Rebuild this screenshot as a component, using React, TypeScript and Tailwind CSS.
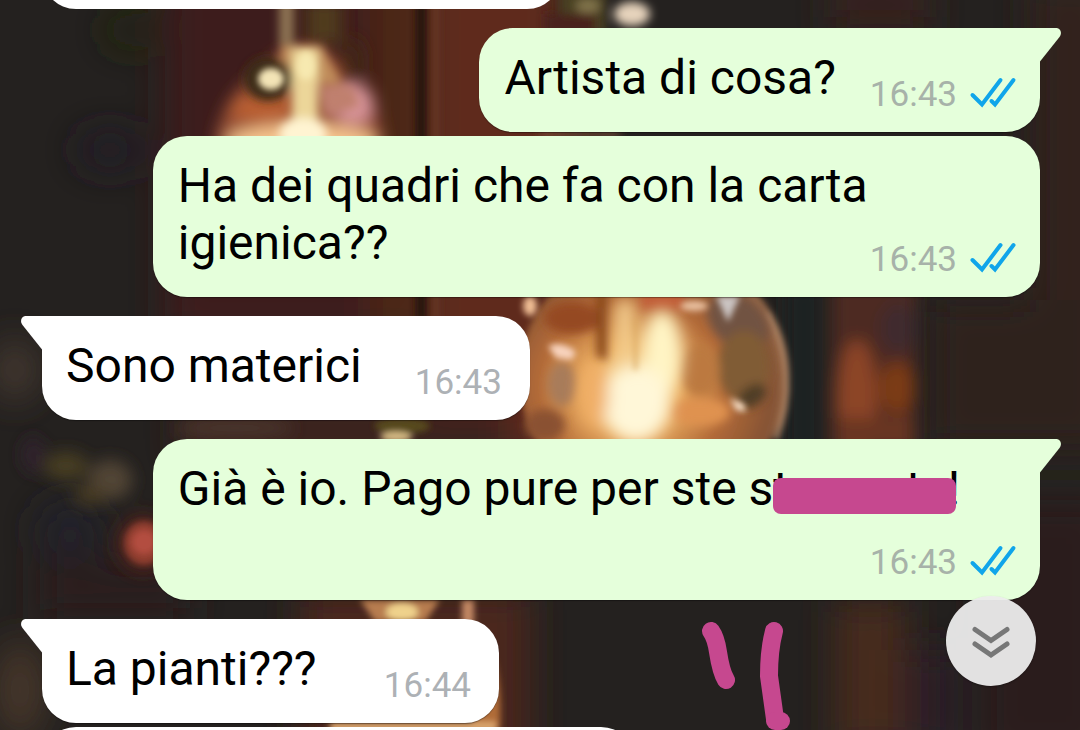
import type { ReactNode } from "react";

type Side = "in" | "out";

type BubbleProps = {
  side: Side;
  time: string;
  tail?: boolean;
  className?: string;
  children: ReactNode;
};

function Tail({ side }: { side: Side }) {
  return (
    <svg
      aria-hidden="true"
      viewBox="0 0 21 34"
      className={
        side === "out"
          ? "absolute top-0 left-full h-[34px] w-[21px] fill-[#e5ffdb]"
          : "absolute top-0 right-full h-[34px] w-[21px] -scale-x-100 fill-white"
      }
    >
      <path d="M-1 0H16C20.500 0 22.500 5 19.500 9L0 33.500H-1Z" />
    </svg>
  );
}

function ReadTicks() {
  return (
    <svg
      role="img"
      aria-label="Letto"
      viewBox="0 0 46 34"
      className="ml-3 h-[34px] w-[46px] overflow-visible fill-none stroke-[#10a5ea] stroke-4"
      strokeLinecap="round"
    >
      <path d="M3.500 17 13 26.500 31.500 2" />
      <path d="M22.500 23 26 26.500 44.500 2" />
    </svg>
  );
}

function Bubble({ side, time, tail = false, className = "", children }: BubbleProps) {
  const out = side === "out";
  const corner = tail ? (out ? "rounded-tr-none" : "rounded-tl-none") : "";

  return (
    <li
      className={`relative flow-root max-w-[88.900%] shrink-0 rounded-[34px] pt-[21px] pb-4 text-[48px] leading-[57px] text-black shadow-[0_1px_1px_rgba(0,0,0,0.35)] ${
        out ? "self-end bg-[#e5ffdb] px-[25px]" : "self-start bg-white px-6"
      } ${corner} ${className}`}
    >
      {tail && <Tail side={side} />}
      {children}
      <span
        className={`float-right mt-[25px] flex items-center text-[35px] leading-[42px] ${
          out ? "ml-[34px] text-[#a7b2a9]" : "ml-[53px] pr-1 text-[#adb1b5]"
        }`}
      >
        <time>{time}</time>
        {out && <ReadTicks />}
      </span>
    </li>
  );
}

// word crossed out with a marker, only the tall letters stick out
function Redacted() {
  return (
    <span className="relative inline-block whitespace-nowrap">
      t<span className="inline-block w-[117px]" />t
      <span className="inline-block w-[26px]" />!
      <span className="absolute top-[18px] right-1 left-0 h-9 rounded-lg bg-[#c6488f]" />
    </span>
  );
}

function Wallpaper() {
  return (
    <svg
      aria-hidden="true"
      viewBox="0 0 1080 730"
      preserveAspectRatio="xMidYMid slice"
      className="absolute inset-0 h-full w-full"
    >
      <defs>
        <filter id="b3" x="-50%" y="-50%" width="200%" height="200%">
          <feGaussianBlur stdDeviation="3" />
        </filter>
        <filter id="b5" x="-50%" y="-50%" width="200%" height="200%">
          <feGaussianBlur stdDeviation="5" />
        </filter>
        <filter id="b8" x="-50%" y="-50%" width="200%" height="200%">
          <feGaussianBlur stdDeviation="8" />
        </filter>
        <filter id="b18" x="-50%" y="-50%" width="200%" height="200%">
          <feGaussianBlur stdDeviation="18" />
        </filter>
        <radialGradient id="globe" cx="0.42" cy="0.55" r="0.58">
          <stop offset="0" stopColor="#fff0b8" />
          <stop offset="0.3" stopColor="#e9ab5f" />
          <stop offset="0.6" stopColor="#b26a38" />
          <stop offset="0.9" stopColor="#855334" />
          <stop offset="1" stopColor="#96694a" />
        </radialGradient>
      </defs>
      <rect width="1080" height="730" fill="#24211f" />

      <g filter="url(#b18)">
        <rect x="165" y="-40" width="240" height="380" fill="#3e1f1b" />
        <rect x="370" y="-40" width="50" height="380" fill="#4d2819" />
        <rect x="425" y="-40" width="140" height="500" fill="#5e2b1e" />
        <rect x="180" y="400" width="330" height="60" fill="#3e241d" />
        <rect x="300" y="590" width="230" height="180" fill="#4b281b" />
        <rect x="830" y="-20" width="100" height="50" fill="#39201b" />
        <rect x="1030" y="-20" width="80" height="320" fill="#33201d" />
        <rect x="930" y="300" width="180" height="150" fill="#2d201f" />
        <rect x="980" y="500" width="130" height="260" fill="#2c1f1e" />
        <rect x="835" y="600" width="70" height="150" fill="#462a1f" />
        <rect x="905" y="650" width="50" height="100" fill="#2c1e26" />
        <rect x="40" y="560" width="150" height="60" fill="#2b1e1f" />
        <ellipse cx="15" cy="370" rx="22" ry="30" fill="#473a30" />
        <ellipse cx="20" cy="690" rx="24" ry="50" fill="#48382a" />
        <ellipse cx="130" cy="30" rx="24" ry="18" fill="#23260f" />
        <ellipse cx="110" cy="150" rx="34" ry="20" fill="#201f26" />
        <ellipse cx="70" cy="530" rx="34" ry="30" fill="#20212a" />
      </g>

      <g filter="url(#b3)">
        <rect x="415" y="-10" width="12" height="330" fill="#2a130f" />
        <rect x="432" y="-10" width="8" height="330" fill="#643524" />
      </g>
      <g filter="url(#b8)">
        <rect x="785" y="285" width="38" height="170" fill="#1b2023" />
        <rect x="832" y="280" width="84" height="170" fill="#4d2922" />
        <ellipse cx="857" cy="400" rx="20" ry="60" fill="#8c4528" />
        <ellipse cx="897" cy="388" rx="18" ry="26" fill="#7b3a16" />
        <ellipse cx="898" cy="328" rx="18" ry="26" fill="#40292d" />
        <rect x="836" y="418" width="76" height="30" fill="#693523" />
      </g>

      {/* hanging bulb, top left */}
      <g filter="url(#b8)">
        <path d="M262 70 Q300 25 340 65 Q378 84 384 150 H214 Q220 95 262 70Z" fill="#965034" />
        <ellipse cx="262" cy="108" rx="32" ry="14" fill="#b95f31" />
        <ellipse cx="354" cy="104" rx="20" ry="20" fill="#d9949a" />
        <rect x="306" y="0" width="36" height="44" fill="#4f3b1a" />
        <ellipse cx="352" cy="62" rx="12" ry="24" fill="#432713" />
        <ellipse cx="302" cy="142" rx="76" ry="18" fill="#f6c48d" />
      </g>
      <g filter="url(#b5)">
        <rect x="279" y="-5" width="15" height="50" fill="#8d7352" />
        <path d="M280 46H322L342 84H284Z" fill="#c18e5c" />
        <ellipse cx="268" cy="79" rx="24" ry="22" fill="#3a2a18" />
        <rect x="292" y="48" width="26" height="90" fill="#ecd699" />
        <path d="M320 86H352L360 106 326 116Z" fill="#c0806e" />
        <ellipse cx="303" cy="134" rx="24" ry="16" fill="#fff4d2" />
      </g>
      <g filter="url(#b3)">
        <ellipse cx="271" cy="79" rx="13" ry="11" fill="#f3e4b6" />
        <ellipse cx="306" cy="66" rx="9" ry="14" fill="#f7e9b0" />
      </g>

      {/* cap of the centre bulb */}
      <g filter="url(#b5)">
        <rect x="560" y="-10" width="46" height="44" fill="#484124" />
        <rect x="545" y="14" width="50" height="20" fill="#4a201b" />
        <ellipse cx="588" cy="6" rx="12" ry="7" fill="#82744b" />
        <ellipse cx="632" cy="14" rx="18" ry="12" fill="#e6d3bc" />
        <rect x="540" y="131" width="80" height="6" fill="#82533a" />
      </g>

      {/* lit globe in the centre */}
      <g filter="url(#b3)">
        <ellipse cx="654" cy="376" rx="135" ry="128" fill="url(#globe)" />
        <path d="M768 312Q802 374 776 440" fill="none" stroke="#b98e6c" strokeWidth="4" />
      </g>
      <g filter="url(#b5)">
        <ellipse cx="738" cy="322" rx="34" ry="24" fill="#715343" transform="rotate(40 738 322)" />
        <ellipse cx="744" cy="366" rx="26" ry="36" fill="#805b35" />
        <ellipse cx="572" cy="318" rx="28" ry="16" fill="#954a22" />
        <rect x="596" y="290" width="12" height="70" fill="#8b491d" />
        <rect x="640" y="292" width="44" height="18" fill="#c05c35" />
        <ellipse cx="562" cy="384" rx="14" ry="22" fill="#a87b5a" />
        <ellipse cx="752" cy="396" rx="16" ry="10" fill="#4f3d26" transform="rotate(-35 752 396)" />
        <ellipse cx="700" cy="370" rx="20" ry="26" fill="#bc793f" />
        <ellipse cx="700" cy="412" rx="30" ry="14" fill="#df924f" />
        <ellipse cx="545" cy="425" rx="20" ry="16" fill="#8a5130" />
      </g>
      <g filter="url(#b8)">
        <rect x="616" y="300" width="18" height="90" fill="#f4cf90" />
        <ellipse cx="662" cy="354" rx="20" ry="44" fill="#fff4c4" />
        <ellipse cx="636" cy="404" rx="34" ry="38" fill="#fff7d8" />
        <ellipse cx="594" cy="394" rx="14" ry="34" fill="#f0ae66" />
      </g>
      <g filter="url(#b3)">
        <ellipse cx="530" cy="306" rx="7" ry="10" fill="#f0be94" />
        <path d="M548 346Q562 340 576 352L572 360 556 358Z" fill="#f8d3bd" />
        <ellipse cx="694" cy="306" rx="14" ry="5" fill="#eac1a0" />
        <path d="M716 296H740L728 322Z" fill="#cbc4c2" />
        <path d="M730 398 744 404 746 412 736 410Z" fill="#ffe6cc" />
        <rect x="634" y="318" width="3" height="52" fill="#d8a55c" />
      </g>

      {/* lower left lights */}
      <g filter="url(#b8)">
        <ellipse cx="66" cy="466" rx="22" ry="14" fill="#473e24" />
        <ellipse cx="110" cy="480" rx="22" ry="20" fill="#514435" />
        <ellipse cx="90" cy="495" rx="16" ry="10" fill="#463a20" />
        <ellipse cx="33" cy="455" rx="10" ry="18" fill="#30232f" />
        <ellipse cx="143" cy="543" rx="28" ry="30" fill="#47231a" />
        <ellipse cx="235" cy="428" rx="60" ry="8" fill="#4c372e" />
      </g>
      <g filter="url(#b3)">
        <ellipse cx="402" cy="426" rx="28" ry="8" fill="#57491f" />
        <ellipse cx="396" cy="437" rx="16" ry="5" fill="#d8bd86" />
        <ellipse cx="144" cy="543" rx="20" ry="22" fill="#8f3e2f" />
        <ellipse cx="144" cy="542" rx="12" ry="12" fill="#b34d40" />
        <path d="M360 600H440L425 622H375Z" fill="#b77d50" />
        <ellipse cx="402" cy="612" rx="16" ry="9" fill="#efd28c" />
        <rect x="462" y="600" width="12" height="24" fill="#c38863" />
        <path d="M486 640Q503 670 500 730H470Z" fill="#b06c37" />
        <rect x="330" y="722" width="166" height="10" fill="#dca770" />
      </g>
    </svg>
  );
}

function Scribbles() {
  return (
    <svg
      aria-hidden="true"
      viewBox="0 0 90 112"
      className="absolute right-[290px] bottom-0 h-28 w-[90px] fill-none stroke-[#c6488f]"
      strokeWidth="18"
      strokeLinecap="round"
      strokeLinejoin="round"
    >
      <path d="M11 13Q16 20 18 34Q21 54 26 62" />
      <path d="M74 13Q69 32 69 58L75 101" />
      <path d="M75 103H81" />
    </svg>
  );
}

export default function App() {
  return (
    <main className="relative h-screen overflow-hidden bg-[#24211f] font-[Roboto,sans-serif]">
      <Wallpaper />

      <ol className="relative flex flex-col pr-10 pl-[42px]">
        <li className="-mt-[95px] h-[104px] w-[519px] shrink-0 rounded-[34px] bg-white" />
        <Bubble side="out" time="16:43" tail className="mt-[19px]">
          Artista di cosa?
        </Bubble>
        <Bubble side="out" time="16:43" className="mt-1">
          Ha dei quadri che fa con la carta igienica??
        </Bubble>
        <Bubble side="in" time="16:43" tail className="mt-[19px]">
          Sono materici
        </Bubble>
        <Bubble side="out" time="16:43" tail className="mt-[19px]">
          Già è io. Pago pure per ste s<Redacted />
        </Bubble>
        <Bubble side="in" time="16:44" tail className="mt-[19px] min-w-[457px]">
          La pianti???
        </Bubble>
        <li className="mt-1 h-[104px] w-[593px] shrink-0 rounded-[34px] bg-white" />
      </ol>

      <Scribbles />

      <button
        type="button"
        aria-label="Vai in fondo"
        className="absolute right-11 bottom-11 flex size-[90px] items-center justify-center rounded-full bg-[#ececec]/95 shadow-[0_1px_2px_rgba(0,0,0,0.3)]"
      >
        <svg
          aria-hidden="true"
          viewBox="0 0 40 36"
          className="h-9 w-10 fill-none stroke-[#777777] stroke-5"
          strokeLinecap="round"
        >
          <path d="M4 6.500 20 17.500 36 6.500" />
          <path d="M4 21 20 32 36 21" />
        </svg>
      </button>
    </main>
  );
}
